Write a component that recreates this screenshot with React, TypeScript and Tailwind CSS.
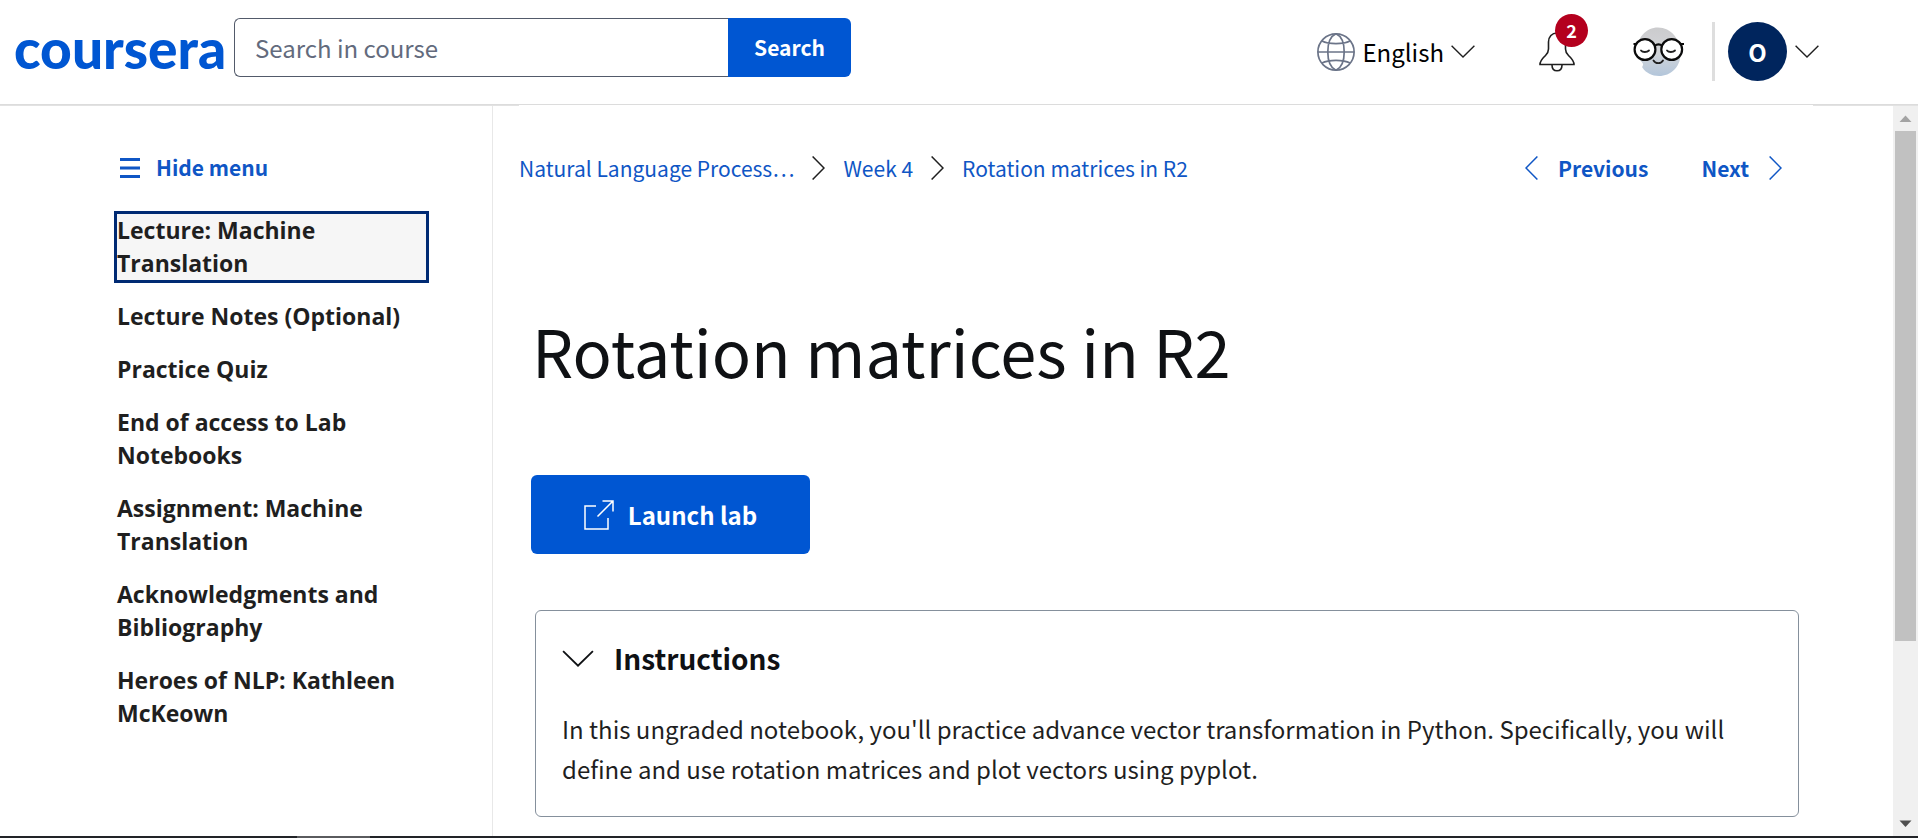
import type { ReactNode } from 'react';

const lessons = [
  'Lecture: Machine Translation',
  'Lecture Notes (Optional)',
  'Practice Quiz',
  'End of access to Lab Notebooks',
  'Assignment: Machine Translation',
  'Acknowledgments and Bibliography',
  'Heroes of NLP: Kathleen McKeown',
];

type IconProps = { className?: string };

function ChevronDown({ className }: IconProps) {
  return (
    <svg viewBox="0 0 24 13" fill="none" stroke="currentColor" strokeWidth="1.4" className={className} aria-hidden="true">
      <path d="M0.6 0.8 12 12 23.4 0.8" />
    </svg>
  );
}

function ChevronRight({ className }: IconProps) {
  return (
    <svg viewBox="0 0 13 24" fill="none" stroke="currentColor" strokeWidth="1.5" className={className} aria-hidden="true">
      <path d="M0.6 0.5 12 12 0.6 23.5" />
    </svg>
  );
}

function ChevronLeft({ className }: IconProps) {
  return (
    <svg viewBox="0 0 13 24" fill="none" stroke="currentColor" strokeWidth="1.5" className={className} aria-hidden="true">
      <path d="M12.4 0.5 1 12 12.4 23.5" />
    </svg>
  );
}

function Globe() {
  return (
    <svg viewBox="0 0 38 38" fill="none" stroke="#6b7488" strokeWidth="1.7" className="size-[38px]" aria-hidden="true">
      <circle cx="19" cy="19" r="18.1" />
      <path d="M19 0.8C14 3 10.8 10 10.8 19S14 35 19 37.2C24 35 27.2 28 27.2 19S24 3 19 .8ZM0.8 19H37.2M5 8c3 1.600 8 2.600 14 2.600S30 9.600 33 8M5 30c3-1.600 8-2.600 14-2.600S30 28.400 33 30" />
    </svg>
  );
}

function Bell() {
  return (
    <svg viewBox="0 0 36 40" fill="none" stroke="#1f1f1f" strokeWidth="1.6" className="h-10 w-9" aria-hidden="true">
      <path d="M18 1C13 1 9.500 4.500 9.500 10v7c0 3-1 4.500-3 6.500C3 27 1 28.500 1 32.500h34c0-4-2-5.500-5.500-9-2-2-3-3.500-3-6.500v-7C26.500 4.500 23 1 18 1Z" />
      <path d="M13 33c0 3.700 2 5.800 5 5.800s5-2.100 5-5.800" />
    </svg>
  );
}

function CoachFace() {
  return (
    <svg viewBox="0 0 52 50" fill="none" className="h-[50px] w-[52px]" aria-hidden="true">
      <defs>
        <linearGradient id="face" x1="0" y1="0" x2="0" y2="1">
          <stop offset="0" stopColor="#cbcbcd" />
          <stop offset="0.500" stopColor="#d3d5d8" />
          <stop offset="1" stopColor="#b3c6db" />
        </linearGradient>
      </defs>
      <path
        d="M25 0.500C13 0.500 4 11 4.500 23 4.700 30 7 33 9.500 36c1.500 2-.5 3-.2 4.500C13 46 19 49 26 49c12 0 21-9 21.500-21C48 12 38 .5 25 .5Z"
        fill="url(#face)"
      />
      <g stroke="#0b0b0b" strokeWidth="2.200">
        <circle cx="12" cy="22.500" r="10.400" fill="#fff" />
        <circle cx="38.700" cy="22.500" r="10.400" fill="#fff" />
        <path d="M21.500 19c2.500-2 5.500-2 8 0M0.500 17h3M48 17h3" />
      </g>
      <g stroke="#1f1f1f" strokeWidth="1.800" strokeLinecap="round">
        <path d="M8 23.500c1.500 2 6 2 8 0M34 23.500c1.500 2 6 2 8 0M20.500 33.500c2 3.500 7.500 3.500 9.500 0" />
      </g>
    </svg>
  );
}

function ExternalLink() {
  return (
    <svg viewBox="0 0 30 30" fill="none" stroke="#fff" strokeWidth="1.500" className="size-[30px]" aria-hidden="true">
      <path d="M12 6H1v23h23V18M18.500 1H29v10.500M29 1 13.500 16.500" />
    </svg>
  );
}

function Crumb({ children }: { children: ReactNode }) {
  return (
    <a href="#" className="whitespace-nowrap hover:underline">
      {children}
    </a>
  );
}

function Header() {
  return (
    <header className="flex h-[105px] shrink-0 items-start border-b border-[#dcdcdc] pl-[14px]">
      <a
        href="#"
        className="mt-4 w-[220px] shrink-0 font-[Lato,sans-serif] text-[55px] leading-[64px] font-black text-[#0056d2]"
      >
        coursera
      </a>
      <form className="mt-[18px] flex h-[59px] w-[617px]" onSubmit={(event) => event.preventDefault()}>
        <input
          type="text"
          aria-label="Search in course"
          placeholder="Search in course"
          className="min-w-0 flex-1 rounded-l-md border border-r-0 border-[#525a6a] px-5 text-[24px] text-[#1f1f1f] placeholder:text-[#636b7d]"
        />
        <button type="submit" className="w-[123px] rounded-r-md bg-[#0056d2] text-[21px] font-bold text-white">
          Search
        </button>
      </form>
      <div className="mt-[22px] mr-[99px] ml-auto flex h-[59px] items-center text-[#1f1f1f]">
        <button type="button" className="flex items-center gap-[7px]">
          <Globe />
          <span className="text-[24px] leading-8 text-black">English</span>
          <ChevronDown className="h-[13px] w-6" />
        </button>
        <button type="button" aria-label="Notifications" className="relative ml-[64px]">
          <Bell />
          <span className="absolute -top-[18px] left-4 flex size-[33px] items-center justify-center rounded-full bg-[#b4001e] text-[18px] font-bold text-white">
            2
          </span>
        </button>
        <button type="button" aria-label="Coach" className="ml-[58px]">
          <CoachFace />
        </button>
        <div className="ml-[27px] h-full w-[3px] bg-[#dedede]" />
        <button type="button" aria-label="Account" className="ml-[13px] flex items-center gap-2">
          <span className="flex size-[59px] items-center justify-center rounded-full bg-[#00255d] text-[24px] font-bold text-white">
            O
          </span>
          <ChevronDown className="h-[13px] w-6" />
        </button>
      </div>
    </header>
  );
}

function Sidebar() {
  return (
    <aside className="w-[493px] shrink-0 border-r border-[#e8e8e8] pt-[46px] pr-[66px] pl-[117px]">
      <button type="button" className="flex h-8 items-center gap-4 pl-[3px] text-[21px] font-bold text-[#0f56c5]">
        <svg viewBox="0 0 20 20" className="size-5" stroke="currentColor" strokeWidth="3" aria-hidden="true">
          <path d="M0 1.500H20M0 10H20M0 18.500H20" />
        </svg>
        Hide menu
      </button>
      <ul className="mt-[30px] flex flex-col gap-5">
        {lessons.map((lesson, index) => (
          <li key={lesson}>
            <a
              href="#"
              className={
                index === 0
                  ? 'block bg-[#f6f6f6] font-["Open_Sans",sans-serif] text-[23px] leading-[33px] font-bold text-[#1f1f1f] outline-3 outline-[#002a73]'
                  : 'block font-["Open_Sans",sans-serif] text-[23px] leading-[33px] font-bold text-[#1f1f1f]'
              }
            >
              {lesson}
            </a>
          </li>
        ))}
      </ul>
    </aside>
  );
}

function Lab() {
  return (
    <main className="min-w-0 flex-1 pr-[80px] pl-[26px]">
      <nav aria-label="Breadcrumb" className="-mt-px flex items-center bg-white pt-[47px] pr-[31px] text-[21px] leading-8 text-[#0f56c5]">
        <div className="flex items-center gap-[18px]">
          <Crumb>Natural Language Process…</Crumb>
          <ChevronRight className="h-6 w-[13px] text-[#1f1f1f]" />
          <Crumb>Week 4</Crumb>
          <ChevronRight className="h-6 w-[13px] text-[#1f1f1f]" />
          <Crumb>Rotation matrices in R2</Crumb>
        </div>
        <div className="ml-auto flex items-center gap-[53px] font-bold">
          <a href="#" className="flex items-center gap-5">
            <ChevronLeft className="h-6 w-[13px]" />
            Previous
          </a>
          <a href="#" className="flex items-center gap-5">
            Next
            <ChevronRight className="h-6 w-[13px]" />
          </a>
        </div>
      </nav>
      <h1 className="mt-[121px] ml-[13px] text-[65px] leading-[90px] text-[#0f1114]">Rotation matrices in R2</h1>
      <button
        type="button"
        className="mt-20 ml-3 flex h-[79px] w-[279px] items-center justify-center gap-[14px] rounded-md bg-[#0056d2] text-[24px] font-bold text-white"
      >
        <ExternalLink />
        Launch lab
      </button>
      <section className="mt-[56px] mr-[14px] mb-[19px] ml-4 rounded-md border border-[#85909c] px-[26px] pt-[26px] pb-[27px]">
        <h2>
          <button type="button" aria-expanded="true" className="flex items-center gap-5 text-[28px] leading-[42px] font-bold text-[#0f1114]">
            <ChevronDown className="h-[17px] w-8" />
            Instructions
          </button>
        </h2>
        <p className="mt-[30px] text-[24px] leading-10 text-[#1f1f1f]">
          In this ungraded notebook, you'll practice advance vector transformation in Python. Specifically, you will
          define and use rotation matrices and plot vectors using pyplot.
        </p>
      </section>
    </main>
  );
}

function ScrollTrack() {
  return (
    <div className="flex w-[25px] shrink-0 flex-col items-center bg-[#f0f0f0]" aria-hidden="true">
      <svg viewBox="0 0 25 25" className="size-[25px]" fill="#a3a3a3">
        <path d="M12.500 9.500 18.500 16H6.500Z" />
      </svg>
      <div className="w-[21px] grow-3 bg-[#c1c1c1]" />
      <div className="grow" />
      <svg viewBox="0 0 25 25" className="size-[25px]" fill="#4f4f4f">
        <path d="M12.500 16 18.500 9.500H6.500Z" />
      </svg>
    </div>
  );
}

export default function App() {
  return (
    <div className='flex min-h-screen flex-col bg-white font-["Noto_Sans_CJK_SC","Noto_Sans",sans-serif]'>
      <Header />
      <div className="flex flex-1 border-t border-[#e2e2e2]">
        <Sidebar />
        <Lab />
        <ScrollTrack />
      </div>
      <div className="h-[2px] bg-[#222428] pl-[297px]">
        <div className="h-full w-[73px] bg-[#5a5b5e]" />
      </div>
    </div>
  );
}
